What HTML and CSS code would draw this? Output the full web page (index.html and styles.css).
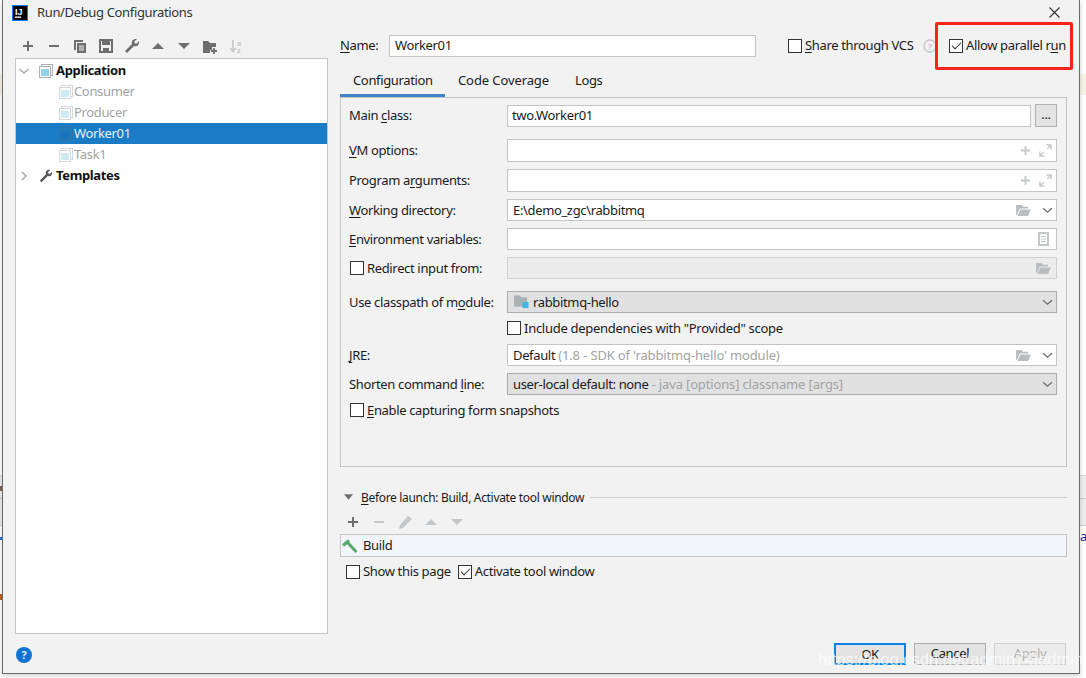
FILE: index.html
```html
<!DOCTYPE html>
<html lang="en">
<head>
<meta charset="utf-8">
<title>Run/Debug Configurations</title>
<link rel="stylesheet" href="styles.css">
</head>
<body>
<svg class="defs" width="0" height="0" aria-hidden="true">
  <defs>
    <symbol id="app" viewBox="0 0 14 14">
      <rect x="2.500" y="0.500" width="11" height="11" fill="none" stroke="currentColor"/>
      <rect x="0.500" y="2.500" width="11" height="11" fill="var(--icon-bg)" stroke="currentColor"/>
      <rect x="2" y="5" width="8" height="7" fill="var(--icon-fill)"/>
    </symbol>
    <symbol id="folder" viewBox="0 0 16 13">
      <path d="M0 1h6l1.500 2H13v2H4L1 12H0z M4.500 6H16l-3 7H1.500z" fill="#b9bdc0"/>
    </symbol>
    <symbol id="chev" viewBox="0 0 10 6">
      <path d="M1 1l4 3.500L9 1" fill="none" stroke="#6e6e6e" stroke-width="1.200"/>
    </symbol>
    <symbol id="expand" viewBox="0 0 14 14">
      <path d="M8 1h5v5M13 1L9 5" fill="none" stroke="#c4c8cb" stroke-width="1.500"/>
      <path d="M1 8v5h5M1 13l4-4" fill="none" stroke="#c4c8cb" stroke-width="1.500"/>
    </symbol>
  </defs>
</svg>

<div class="bg-band bg-yellow"></div>
<div class="bg-band bg-gray"></div>
<div class="edge-mark mark-brown"></div>
<div class="edge-mark mark-blue"></div>
<div class="edge-mark mark-orange"></div>
<div class="edge-char">a</div>
<main class="dialog">
  <header class="titlebar">
    <svg class="logo" viewBox="0 0 16 16"><rect width="16" height="16" fill="#087cfa"/><rect x="1" y="1" width="14" height="14" fill="#000"/><rect x="3" y="11.500" width="6" height="1.300" fill="#fff"/><text x="3" y="9.500" class="logo-text">IJ</text></svg>
    <span class="title">Run/Debug Configurations</span>
    <svg class="close" viewBox="0 0 11 11"><path d="M.5.5l10 10M10.500.5l-10 10" stroke="#333" stroke-width="1.100" fill="none"/></svg>
  </header>

  <div class="content">
    <aside class="sidebar">
      <div class="toolbar">
        <svg class="tool" viewBox="0 0 16 16"><path d="M3 8h10M8 3v10" stroke="#6e6e6e" stroke-width="2"/></svg>
        <svg class="tool" viewBox="0 0 16 16"><path d="M3 8h10" stroke="#6e6e6e" stroke-width="2"/></svg>
        <svg class="tool" viewBox="0 0 16 16"><path d="M2 2h9v2H4v8H2z" fill="#6e6e6e"/><path d="M5 5h9v10H5z" fill="#6e6e6e"/><path d="M7 8h5M7 10h5M7 12h5" stroke="#f2f2f2"/></svg>
        <svg class="tool" viewBox="0 0 16 16"><path d="M2 2h12v12H2z" fill="none" stroke="#6e6e6e" stroke-width="2"/><path d="M4 2h8v5H4zM5 10h6v4H5z" fill="#6e6e6e"/></svg>
        <svg class="tool" viewBox="0 0 16 16"><path d="M1 13l7-7c-1-3 1-5.500 5-5l-3 3 2 2 3-3c.5 4-2 6-5 5l-7 7z" fill="#6e6e6e"/></svg>
        <svg class="tool" viewBox="0 0 16 16"><path d="M2 11l6-6 6 6z" fill="#6e6e6e"/></svg>
        <svg class="tool" viewBox="0 0 16 16"><path d="M2 5l6 6 6-6z" fill="#6e6e6e"/></svg>
        <svg class="tool" viewBox="0 0 16 16"><path d="M1 3h5l2 2h6v4H10v3H8v3H1z" fill="#6e6e6e"/><path d="M9 13h6M12 10v6" stroke="#6e6e6e" stroke-width="1.800"/></svg>
        <svg class="tool" viewBox="0 0 16 16"><path d="M5 2v11M2 10l3 3.500L8 10" stroke="#c4c8cb" stroke-width="1.600" fill="none"/><text x="9" y="7.500" class="sort-text">a</text><text x="9" y="14.500" class="sort-text">z</text></svg>
      </div>
      <div class="tree">
        <div class="tree-row">
          <svg class="arrow" viewBox="0 0 10 10"><path d="M.5 3l4.500 4 4.500-4" fill="none" stroke="#a8a8a8" stroke-width="1.500"/></svg>
          <svg class="tree-icon tree-icon-strong"><use href="#app"/></svg>
          <span class="tree-group">Application</span>
        </div>
        <div class="tree-row tree-child"><svg class="tree-icon"><use href="#app"/></svg><span>Consumer</span></div>
        <div class="tree-row tree-child"><svg class="tree-icon"><use href="#app"/></svg><span>Producer</span></div>
        <div class="tree-row tree-child tree-selected"><svg class="tree-icon"><use href="#app"/></svg><span>Worker01</span></div>
        <div class="tree-row tree-child"><svg class="tree-icon"><use href="#app"/></svg><span>Task1</span></div>
        <div class="tree-row">
          <svg class="arrow" viewBox="0 0 10 10"><path d="M3 1l4 4-4 4" fill="none" stroke="#a8a8a8" stroke-width="1.500"/></svg>
          <svg class="tree-icon" viewBox="0 0 16 16"><path d="M1 13l7-7c-1-3 1-5.500 5-5l-3 3 2 2 3-3c.5 4-2 6-5 5l-7 7z" fill="#5a5a5a"/></svg>
          <span class="tree-group">Templates</span>
        </div>
      </div>
      <svg class="help-btn" viewBox="0 0 16 16"><circle cx="8" cy="8" r="8" fill="#0f73d6"/><text x="8" y="12" class="help-text">?</text></svg>
    </aside>

    <section class="main">
      <div class="name-row">
        <label class="name-label"><u>N</u>ame:</label>
        <div class="field name-field">Worker01</div>
        <span class="check share"><i class="box"></i><span class="share-text"><u>S</u>hare through VCS</span></span>
        <svg class="hint" viewBox="0 0 14 14"><circle cx="7" cy="7" r="6" fill="none" stroke="#c4c8cb" stroke-width="1.300"/><text x="7" y="10.500" class="hint-text">?</text></svg>
        <span class="check allow"><i class="box box-on"></i><span>Allow parallel r<u>u</u>n</span></span>
      </div>

      <nav class="tabs">
        <span class="tab tab-active">Configuration</span>
        <span class="tab tab-coverage">Code Coverage</span>
        <span class="tab">Logs</span>
      </nav>

      <div class="panel">
        <div class="row row-main">
          <label>Main <u>c</u>lass:</label>
          <div class="field-group">
            <div class="field grow field-main">two.Worker01</div>
            <div class="dots">...</div>
          </div>
        </div>
        <div class="row row-vm">
          <label><u>V</u>M options:</label>
          <div class="field grow"><span class="tail"><svg class="ic-plus" viewBox="0 0 12 12"><path d="M1 6h10M6 1v10" stroke="#c4c8cb" stroke-width="2"/></svg><svg class="ic-expand"><use href="#expand"/></svg></span></div>
        </div>
        <div class="row row-args">
          <label>Program a<u>r</u>guments:</label>
          <div class="field grow"><span class="tail"><svg class="ic-plus" viewBox="0 0 12 12"><path d="M1 6h10M6 1v10" stroke="#c4c8cb" stroke-width="2"/></svg><svg class="ic-expand"><use href="#expand"/></svg></span></div>
        </div>
        <div class="row row-wd">
          <label><u>W</u>orking directory:</label>
          <div class="field grow"><span>E:\demo_zgc\rabbitmq</span><span class="tail tail-wide"><svg class="ic-folder"><use href="#folder"/></svg><svg class="ic-chev"><use href="#chev"/></svg></span></div>
        </div>
        <div class="row row-env">
          <label><u>E</u>nvironment variables:</label>
          <div class="field grow"><span class="tail"><svg class="ic-doc" viewBox="0 0 11 14"><rect x="1" y="1" width="9" height="12" fill="none" stroke="#c4c8cb" stroke-width="2"/><path d="M3 4.500h5M3 7h5M3 9.500h5" stroke="#c4c8cb"/></svg></span></div>
        </div>
        <div class="row row-redirect">
          <span class="check check-inset"><i class="box"></i><span>Redirect input from:</span></span>
          <div class="field grow field-disabled"><span class="tail"><svg class="ic-folder"><use href="#folder"/></svg></span></div>
        </div>
        <div class="row row-cp">
          <label>Use classpath of m<u>o</u>dule:</label>
          <div class="field grow field-combo">
            <svg class="ic-module" viewBox="0 0 16 14"><path d="M0 0h6l2 2h6v10H0z" fill="#aab2b8"/><rect x="9" y="7" width="6.500" height="6.500" fill="#40b6e0"/></svg>
            <span>rabbitmq-hello</span><span class="tail"><svg class="ic-chev"><use href="#chev"/></svg></span>
          </div>
        </div>
        <div class="row row-inc">
          <span></span>
          <span class="check"><i class="box"></i><span>Include dependencies with "Provided" scope</span></span>
        </div>
        <div class="row row-jre">
          <label><u>J</u>RE:</label>
          <div class="field grow"><span>Default <span class="muted">(1.8 - SDK of 'rabbitmq-hello' module)</span></span><span class="tail tail-wide"><svg class="ic-folder"><use href="#folder"/></svg><svg class="ic-chev"><use href="#chev"/></svg></span></div>
        </div>
        <div class="row row-short">
          <label>Shorten command <u>l</u>ine:</label>
          <div class="field grow field-combo"><span>user-local default: none <span class="muted">- java [options] classname [args]</span></span><span class="tail"><svg class="ic-chev"><use href="#chev"/></svg></span></div>
        </div>
        <div class="row row-snap">
          <span class="check check-inset"><i class="box"></i><span><u>E</u>nable capturing form snapshots</span></span>
        </div>
      </div>

      <div class="before">
        <svg class="before-arrow" viewBox="0 0 10 6"><path d="M0 0h10L5 6z" fill="#6e6e6e"/></svg>
        <span class="before-text"><u>B</u>efore launch: Build, Activate tool window</span>
        <i class="before-line"></i>
      </div>
      <div class="before-tools">
        <svg class="tool" viewBox="0 0 16 16"><path d="M3 8h10M8 3v10" stroke="#6e6e6e" stroke-width="2"/></svg>
        <svg class="tool" viewBox="0 0 16 16"><path d="M3 8h10" stroke="#c4c8cb" stroke-width="2"/></svg>
        <svg class="tool" viewBox="0 0 16 16"><path d="M2 15l1-4 8-9 4 3-9 9z" fill="#c4c8cb"/></svg>
        <svg class="tool" viewBox="0 0 16 16"><path d="M2 11l6-6 6 6z" fill="#c4c8cb"/></svg>
        <svg class="tool" viewBox="0 0 16 16"><path d="M2 5l6 6 6-6z" fill="#c4c8cb"/></svg>
      </div>
      <div class="build-row">
        <svg class="ic-build" viewBox="0 0 16 14"><path d="M1 6.500L7 1.500" stroke="#59a869" stroke-width="3.200" fill="none"/><path d="M5.500 3.500L14.500 13" stroke="#59a869" stroke-width="3" fill="none"/></svg>
        <span class="lift">Build</span>
      </div>
      <div class="after">
        <span class="check"><i class="box"></i><span class="lift">Show this page</span></span>
        <span class="check"><i class="box box-on"></i><span class="lift">Activate tool window</span></span>
      </div>

      <div class="buttons">
        <button class="btn btn-default" type="button">OK</button>
        <button class="btn" type="button">Cancel</button>
        <button class="btn btn-disabled" type="button">Apply</button>
      </div>
    </section>
  </div>
</main>

<div class="redbox"></div>
<div class="watermark">https://blog.csdn.net/admin74Iadmin</div>
</body>
</html>
```
FILE: styles.css
```css
* { box-sizing: border-box; }
html, body { margin: 0; height: 100%; overflow: hidden; }
body {
  background: #fff;
  font: 13px/18px "Noto Sans", "Open Sans", sans-serif;
  letter-spacing: -.35px;
  color: #1a1a1a;
  width: 1086px;
  height: 678px;
  padding: 0 0 0 2px;
}
svg text { letter-spacing: 0; }
u { text-underline-offset: 2px; text-decoration-thickness: 1px; }
.defs { position: absolute; }
.lift { margin-bottom: 2px; }

.bg-band { position: absolute; left: 0; width: 1086px; }
.bg-yellow { top: 74px; height: 21px; background: #f7f3e6; }
.bg-gray {
  top: 475px; height: 51px; background: #eeeeee;
  border-top: 1px solid #d8d8d8; border-bottom: 1px solid #d0d0d0;
}
.bg-gray::after { content: ""; display: block; height: 1px; margin-top: 22px; background: #d0d0d0; }
.edge-mark { position: absolute; left: 0; width: 2px; }
.mark-brown { top: 486px; height: 5px; background: #7c6a5c; }
.mark-blue { top: 537px; height: 3px; background: #2a6fd6; }
.mark-orange { top: 594px; height: 6px; background: #b5651d; }
.edge-char { position: absolute; left: 1080px; top: 527px; color: #1a1a9a; letter-spacing: 0; }

.dialog {
  position: relative;
  width: 1078px;
  height: 674px;
  background: #f2f2f2;
  border-left: 1px solid #6b6b6b;
  border-right: 1px solid #6b6b6b;
  border-bottom: 1px solid #6b6b6b;
  box-shadow: 0 2px 5px rgba(0,0,0,.18);
  display: flex;
  flex-direction: column;
}

.titlebar { height: 25px; display: flex; align-items: center; padding: 0 19px 0 9px; flex: none; }
.logo { width: 16px; height: 16px; margin-right: 9px; flex: none; }
.logo-text { font: bold 9px "Liberation Sans", sans-serif; fill: #fff; }
.title { flex: 1; color: #333; margin-bottom: 2px; }
.close { width: 11px; height: 11px; flex: none; }

.content { flex: 1; display: flex; min-height: 0; }

.sidebar { width: 337px; flex: none; padding-left: 12px; display: flex; flex-direction: column; }
.toolbar { height: 33px; padding: 13px 0 0 5px; display: flex; gap: 10px; flex: none; }
.tool { width: 16px; height: 16px; flex: none; overflow: visible; }
.sort-text { font: 700 7px "Noto Sans", sans-serif; fill: #c4c8cb; }
.tree {
  width: 313px; height: 576px; flex: none;
  background: #fff; border: 1px solid #c4c4c4; padding-top: 1px;
}
.tree-row { height: 21px; display: flex; align-items: center; padding-left: 3px; }
.tree-row span { margin-bottom: 2px; }
.arrow { width: 10px; height: 10px; margin-right: 10px; flex: none; }
.tree-icon {
  --icon-bg: #fff; --icon-fill: #cdeaf5;
  width: 14px; height: 14px; margin-right: 3px; flex: none; color: #d3d7da;
}
.tree-icon-strong { --icon-fill: #8fd3ec; color: #a8b0b5; }
.tree-group { font-weight: 700; color: #111; }
.tree-child { padding-left: 43px; color: #a3a3a3; }
.tree-child .tree-icon { margin-right: 1px; }
.tree-selected { background: #1a7cc4; color: #e8f1f8; }
.tree-selected .tree-icon { --icon-bg: #1a7cc4; --icon-fill: #1875bb; color: #2f74a8; }
.help-btn { width: 16px; height: 16px; margin: 13px 0 0 1px; flex: none; }
.help-text { font: 700 11px "Noto Sans", sans-serif; fill: #dcecfa; text-anchor: middle; }

.main { width: 727px; flex: none; display: flex; flex-direction: column; }

.name-row { height: 22px; margin-top: 10px; display: flex; align-items: center; flex: none; }
.name-label { width: 49px; flex: none; margin-bottom: 2px; }
.field {
  height: 22px; background: #fff; border: 1px solid #c4c4c4;
  display: flex; align-items: center; padding: 0 5px; white-space: nowrap;
}
.name-field { width: 367px; margin-right: 32px; flex: none; padding-bottom: 2px; }
.check { display: inline-flex; align-items: center; gap: 3px; white-space: nowrap; flex: none; }
.check-inset { margin-left: 1px; }
.name-row .check > span { margin-bottom: 2px; }
.box {
  width: 14px; height: 14px; background: #fff; border: 1px solid #333; flex: none; display: block; position: relative;
}
.box-on::after {
  content: ""; position: absolute; left: 2px; top: 2px; width: 8px; height: 4px;
  border-left: 1.200px solid #333; border-bottom: 1.200px solid #333;
  transform: rotate(-45deg);
}
.share-text { width: 110px; }
.share { margin-right: 8px; }
.hint { width: 14px; height: 14px; margin-right: 12px; flex: none; }
.hint-text { font: 700 9px "Noto Sans", sans-serif; fill: #c4c8cb; text-anchor: middle; }

.tabs { height: 27px; margin-top: 13px; display: flex; flex: none; }
.tab { padding: 1px 13px 0; height: 27px; }
.tab-active { border-bottom: 3px solid #4083c9; width: 105px; }
.tab-coverage { letter-spacing: -.1px; }

.panel {
  height: 370px; border: 1px solid #c4c4c4; padding: 0 9px 0 8px; flex: none;
}
.row { display: grid; grid-template-columns: 158px 1fr; align-items: center; height: 22px; }
.row label { white-space: nowrap; }
.row-main label, .row-vm label, .row-args label { margin-bottom: 2px; }
.grow { min-width: 0; width: 100%; }
.tail { margin-left: auto; display: inline-flex; align-items: center; gap: 8px; }
.tail-wide { gap: 11px; }
.field-group { display: flex; gap: 4px; align-items: flex-end; height: 23px; }
.field-group .field { flex: 1; }
.field-main { padding-left: 4px; padding-bottom: 2px; }
.dots {
  width: 22px; height: 23px; background: #e3e3e3; border: 1px solid #b0b0b0;
  display: flex; justify-content: center; line-height: 15px; flex: none; padding-top: 2px;
}
.row-main { margin-top: 6px; height: 23px; }
.row-vm { margin-top: 12px; height: 23px; }
.row-vm .field, .row-args .field { height: 23px; }
.row-args { margin-top: 7px; height: 23px; }
.row-wd { margin-top: 7px; }
.row-env { margin-top: 7px; }
.row-redirect { margin-top: 7px; }
.row-cp { margin-top: 12px; }
.row-inc { margin-top: 4px; height: 22px; letter-spacing: -.28px; }
.row-jre { margin-top: 5px; }
.row-short { margin-top: 7px; }
.row-snap { margin-top: 4px; }
.field-disabled { background: #ececec; border-color: #d2d2d2; }
.field-combo { background: #e1e1e1; border-color: #adadad; }
.muted { color: #a3a3a3; letter-spacing: -.15px; }

.ic-plus { width: 11px; height: 11px; }
.ic-expand { width: 13px; height: 13px; margin-right: -1px; }
.ic-folder { width: 15px; height: 12px; }
.ic-chev { width: 11px; height: 7px; margin-right: -2px; }
.ic-doc { width: 11px; height: 14px; margin-right: 2px; }
.ic-module { width: 15px; height: 14px; margin: 0 4px 0 1px; flex: none; }

.before { height: 18px; margin-top: 21px; display: flex; align-items: center; flex: none; padding-left: 4px; }
.before-arrow { width: 9px; height: 6px; margin-right: 8px; }
.before-text { font-size: 12px; letter-spacing: -.32px; margin-top: 2px; }
.before-line { flex: 1; height: 1px; background: #d0d0d0; margin-left: 6px; }
.before-tools { height: 16px; margin-top: 8px; display: flex; gap: 10px; padding-left: 5px; flex: none; }
.build-row {
  height: 23px; margin-top: 4px; background: #f2f6fb; border: 1px solid #c4c4c4;
  display: flex; align-items: center; flex: none; padding-left: 1px;
}
.ic-build { width: 16px; height: 14px; margin-right: 5px; flex: none; }
.after { height: 18px; margin-top: 6px; display: flex; gap: 7px; padding-left: 6px; flex: none; }

.buttons { margin-top: auto; margin-bottom: 8px; display: flex; justify-content: flex-end; gap: 8px; flex: none; padding-right: 1px; }
.btn {
  width: 72px; height: 22px; background: #e3e3e3; border: 1px solid #adadad; padding: 0 0 3px;
  font: inherit; letter-spacing: inherit; line-height: 18px; color: #1a1a1a;
}
.btn-default { border: 2px solid #0a84e0; }
.btn-disabled { background: #ececec; border-color: #d2d2d2; color: #b0b0b0; }

.redbox {
  position: absolute; left: 935px; top: 22px; width: 138px; height: 48px;
  border: 3px solid #fb2418; border-radius: 2px; pointer-events: none;
}
.watermark {
  position: absolute; left: 818px; top: 647px; font: 16.500px/24px "Liberation Sans", sans-serif;
  letter-spacing: 0; color: rgba(255,255,255,.72); white-space: nowrap; pointer-events: none;
}
```
